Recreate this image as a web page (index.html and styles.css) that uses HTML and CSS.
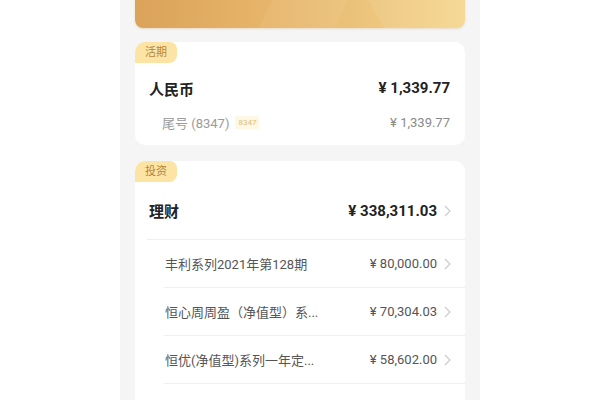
FILE: index.html
```html
<!DOCTYPE html>
<html lang="zh-CN">
<head>
<meta charset="utf-8">
<title>账户</title>
<link rel="stylesheet" href="styles.css">
</head>
<body>
<div class="phone">
  <div class="hero"></div>

  <section class="card card-current">
    <span class="tag">活期</span>
    <div class="row-main">
      <span class="title">人民币</span>
      <span class="amount-bold">¥ 1,339.77</span>
    </div>
    <div class="row-sub">
      <span class="acct">尾号 (8347) <span class="badge">8347</span></span>
      <span class="amount-light">¥ 1,339.77</span>
    </div>
  </section>

  <section class="card card-invest">
    <span class="tag">投资</span>
    <div class="row-main row-head">
      <span class="title">理财</span>
      <span class="right"><span class="amount-bold">¥ 338,311.03</span><svg class="chev" viewBox="0 0 7 12"><polyline points="1,1 6,6 1,11"/></svg></span>
    </div>
    <ul class="list">
      <li class="item"><span class="name">丰利系列2021年第128期</span><span class="right"><span class="amount">¥ 80,000.00</span><svg class="chev" viewBox="0 0 7 12"><polyline points="1,1 6,6 1,11"/></svg></span></li>
      <li class="item"><span class="name">恒心周周盈（净值型）系...</span><span class="right"><span class="amount">¥ 70,304.03</span><svg class="chev" viewBox="0 0 7 12"><polyline points="1,1 6,6 1,11"/></svg></span></li>
      <li class="item"><span class="name">恒优(净值型)系列一年定...</span><span class="right"><span class="amount">¥ 58,602.00</span><svg class="chev" viewBox="0 0 7 12"><polyline points="1,1 6,6 1,11"/></svg></span></li>
      <li class="item"><span class="name">恒利季季盈系列第6期</span><span class="right"><span class="amount">¥ 50,000.00</span><svg class="chev" viewBox="0 0 7 12"><polyline points="1,1 6,6 1,11"/></svg></span></li>
    </ul>
  </section>
</div>
</body>
</html>
```

FILE: styles.css
```css
* { box-sizing: border-box; }
html, body { margin: 0; padding: 0; }
body {
  background: #ffffff;
  font-family: "Roboto", "Noto Sans CJK SC", sans-serif;
}
.phone {
  width: 360px;
  height: 400px;
  margin: 0 auto;
  background: #f5f5f5;
  padding: 0 15px;
  overflow: hidden;
}
.hero {
  height: 28px;
  border-radius: 0 0 8px 8px;
  background:
    linear-gradient(115deg, rgba(255,255,255,0) 40%, rgba(255,255,255,0.05) 40%, rgba(255,255,255,0.05) 62%, rgba(255,255,255,0) 62%),
    linear-gradient(60deg, rgba(0,0,0,0) 72%, rgba(255,255,255,0.07) 72%),
    linear-gradient(90deg, #dba25a 0%, #e5b368 35%, #ebc179 65%, #f5d68e 100%);
  box-shadow: 0 1px 2px rgba(190,140,70,0.25);
}
.card {
  background: #ffffff;
  border-radius: 10px;
  display: flex;
  flex-direction: column;
}
.card-current {
  margin-top: 14px;
  height: 103px;
  padding: 0 15px 0 14px;
}
.card-invest {
  margin-top: 16px;
  padding: 0 0 0 12px;
}
.tag {
  align-self: flex-start;
  margin-left: -14px;
  width: 42px;
  height: 21px;
  line-height: 21px;
  text-align: center;
  font-size: 11px;
  color: #b4873c;
  background: #fce4a4;
  border-radius: 10px 7px 8px 0;
}
.card-invest .tag { margin-left: -12px; }
.row-main {
  display: flex;
  justify-content: space-between;
  align-items: center;
  height: 46px;
  padding-top: 4px;
}
.title {
  font-size: 15px;
  font-weight: 700;
  color: #222222;
}
.amount-bold {
  font-size: 15px;
  font-weight: 700;
  color: #222222;
}
.row-sub {
  display: flex;
  justify-content: space-between;
  align-items: center;
  height: 26px;
  padding-left: 13px;
}
.acct {
  font-size: 13px;
  color: #9a9a9a;
  display: flex;
  align-items: center;
}
.badge {
  margin-left: 6px;
  font-size: 8px;
  color: #dcc07a;
  background: #fff7e4;
  padding: 2px 3px;
  border-radius: 2px;
}
.amount-light {
  font-size: 13px;
  color: #8a8a8a;
}
.row-head {
  height: 58px;
  padding: 0 14px 0 2px;
  border-bottom: 1px solid #efefef;
}
.right {
  display: flex;
  align-items: center;
}
.chev {
  width: 7px;
  height: 12px;
  margin-left: 7px;
  fill: none;
  stroke: #cccccc;
  stroke-width: 1.2;
}
.list {
  list-style: none;
  margin: 0;
  padding: 0 0 0 17px;
}
.item {
  height: 48px;
  display: flex;
  justify-content: space-between;
  align-items: center;
  border-bottom: 1px solid #efefef;
  padding: 0 14px 0 1px;
}
.name {
  font-size: 13px;
  color: #555555;
}
.amount {
  font-size: 13px;
  color: #555555;
}
```
